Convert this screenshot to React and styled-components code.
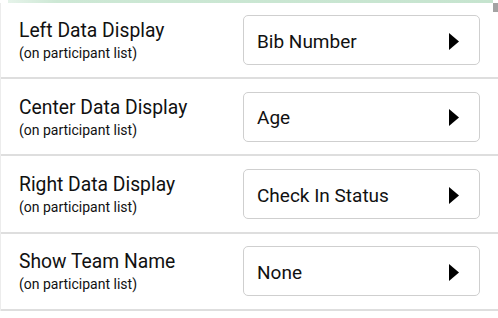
import styled, { createGlobalStyle } from "styled-components";

const GlobalStyle = createGlobalStyle`
  html, body {
    margin: 0;
    padding: 0;
    background: #ffffff;
    overflow: hidden;
  }
  body {
    font-family: Roboto, "Noto Sans", Arial, sans-serif;
    color: #111;
  }
`;

const settings = [
  { label: "Left Data Display", value: "Bib Number" },
  { label: "Center Data Display", value: "Age" },
  { label: "Right Data Display", value: "Check In Status" },
  { label: "Show Team Name", value: "None" },
];

function App() {
  return (
    <>
      <GlobalStyle />
      <StScreen>
        <StTopBar>
          <StScrollThumb />
        </StTopBar>
        <StList>
          {settings.map((item) => (
            <StRow key={item.label}>
              <StLabelBox>
                <StTitle>{item.label}</StTitle>
                <StSubTitle>(on participant list)</StSubTitle>
              </StLabelBox>
              <StSelect>
                <span>{item.value}</span>
                <StArrow viewBox="0 0 10 17">
                  <path d="M0 0 L10 8.5 L0 17 Z" fill="#000" />
                </StArrow>
              </StSelect>
            </StRow>
          ))}
        </StList>
      </StScreen>
    </>
  );
}

export default App;

const StScreen = styled.div`
  width: 498px;
  height: 318px;
  position: relative;
  overflow: hidden;
`;

const StTopBar = styled.div`
  height: 3px;
  margin-left: 8px;
  margin-right: 5px;
  background: linear-gradient(to right, #e6f3ea 0%, #cde8d5 10%, #c6e4cf 100%);
`;

// scrollbar corner sitting over the list
const StScrollThumb = styled.div`
  position: absolute;
  right: 0;
  top: 3px;
  width: 5px;
  height: 9px;
  background: #a3a3a3;
`;

const StList = styled.div`
  border-left: 1px solid #ececec;
`;

const StRow = styled.div`
  display: flex;
  align-items: center;
  height: 75.4px;
  padding: 0 18px;
  border-bottom: 2px solid #dedede;

  &:first-child {
    height: 74px;
  }
`;

const StLabelBox = styled.div`
  display: flex;
  flex-direction: column;
  width: 224px;
  padding-top: 1px;
`;

const StTitle = styled.div`
  font-size: 19.3px;
  line-height: 23px;
  color: #111;
`;

const StSubTitle = styled.div`
  font-size: 14px;
  line-height: 18px;
  margin-top: 2px;
  color: #111;
`;

const StSelect = styled.div`
  display: flex;
  align-items: center;
  justify-content: space-between;
  box-sizing: border-box;
  width: 237px;
  height: 50px;
  padding: 2px 20px 0 13px;
  border: 1px solid #cfcfcf;
  border-radius: 5px;
  font-size: 19px;
  color: #111;
`;

const StArrow = styled.svg`
  width: 10px;
  height: 17px;
`;
